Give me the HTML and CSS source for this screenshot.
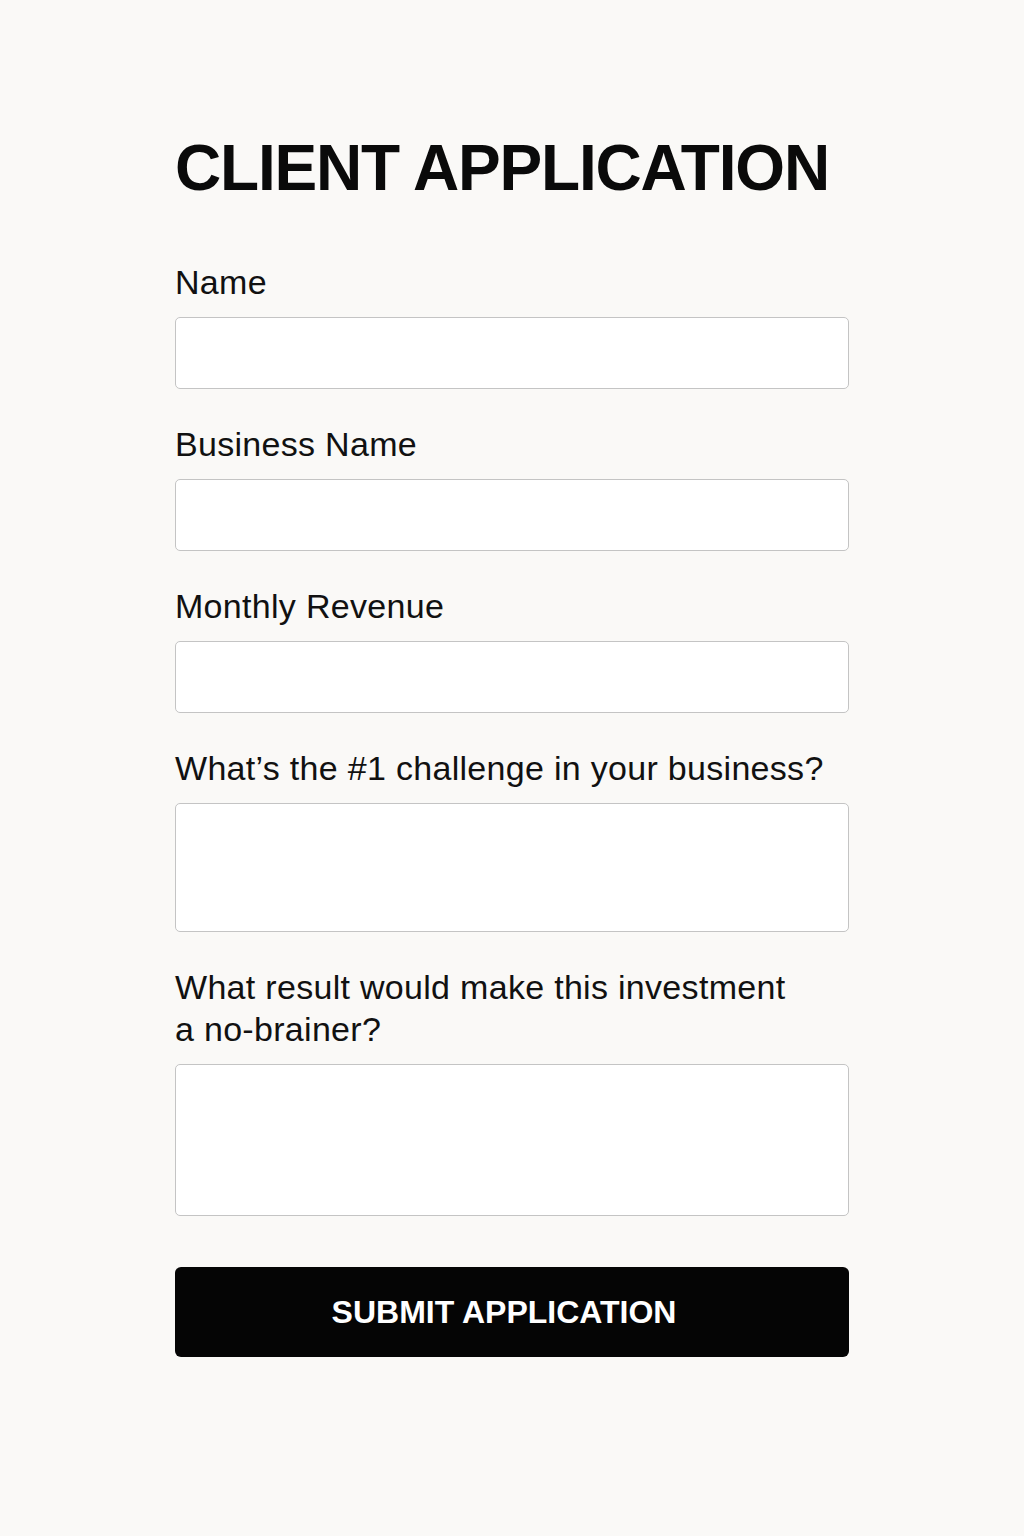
FILE: index.html
```html
<!DOCTYPE html>
<html lang="en">
<head>
  <meta charset="UTF-8">
  <meta name="viewport" content="width=device-width, initial-scale=1.0">
  <title>Client Application</title>
  <link rel="stylesheet" href="styles.css">
</head>
<body>
  <div class="container">
    <h1>CLIENT APPLICATION</h1>
    <form class="form">
      <div class="field">
        <label for="name">Name</label>
        <input type="text" id="name">
      </div>
      <div class="field">
        <label for="business">Business Name</label>
        <input type="text" id="business">
      </div>
      <div class="field">
        <label for="revenue">Monthly Revenue</label>
        <input type="text" id="revenue">
      </div>
      <div class="field">
        <label for="challenge">What’s the #1 challenge in your business?</label>
        <textarea id="challenge" class="short"></textarea>
      </div>
      <div class="field">
        <label for="result">What result would make this investment<br>a no-brainer?</label>
        <textarea id="result" class="tall"></textarea>
      </div>
      <button type="submit" class="button">SUBMIT APPLICATION</button>
    </form>
  </div>
</body>
</html>
```

FILE: styles.css
```css
body {
  font-family: "Liberation Sans", Arial, sans-serif;
  margin: 0;
  padding: 0;
  background-color: #faf9f7;
  color: #111111;
}

.container {
  width: 674px;
  margin: 0 auto;
  padding-top: 136px;
}

h1 {
  margin: 0 0 61px;
  font-size: 64px;
  line-height: 64px;
  font-weight: bold;
  letter-spacing: -1.2px;
  color: #0a0a0a;
}

.form {
  display: flex;
  flex-direction: column;
  gap: 34px;
}

.field {
  display: flex;
  flex-direction: column;
  gap: 14px;
}

.field label {
  font-size: 34px;
  line-height: 42px;
  letter-spacing: 0.3px;
}

.field input,
.field textarea {
  box-sizing: border-box;
  width: 100%;
  margin: 0;
  background-color: #ffffff;
  border: 1.5px solid #c4c4c4;
  border-radius: 5px;
  font-family: inherit;
  font-size: 24px;
  padding: 0 16px;
  resize: none;
}

.field input {
  height: 72px;
}

.field textarea.short {
  height: 129px;
}

.field textarea.tall {
  height: 152px;
}

.button {
  margin-top: 17px;
  height: 90px;
  width: 100%;
  padding: 0 16px 0 0;
  font-family: inherit;
  font-size: 32px;
  font-weight: bold;
  color: #ffffff;
  background-color: #050505;
  border: none;
  border-radius: 6px;
  cursor: pointer;
}
```
